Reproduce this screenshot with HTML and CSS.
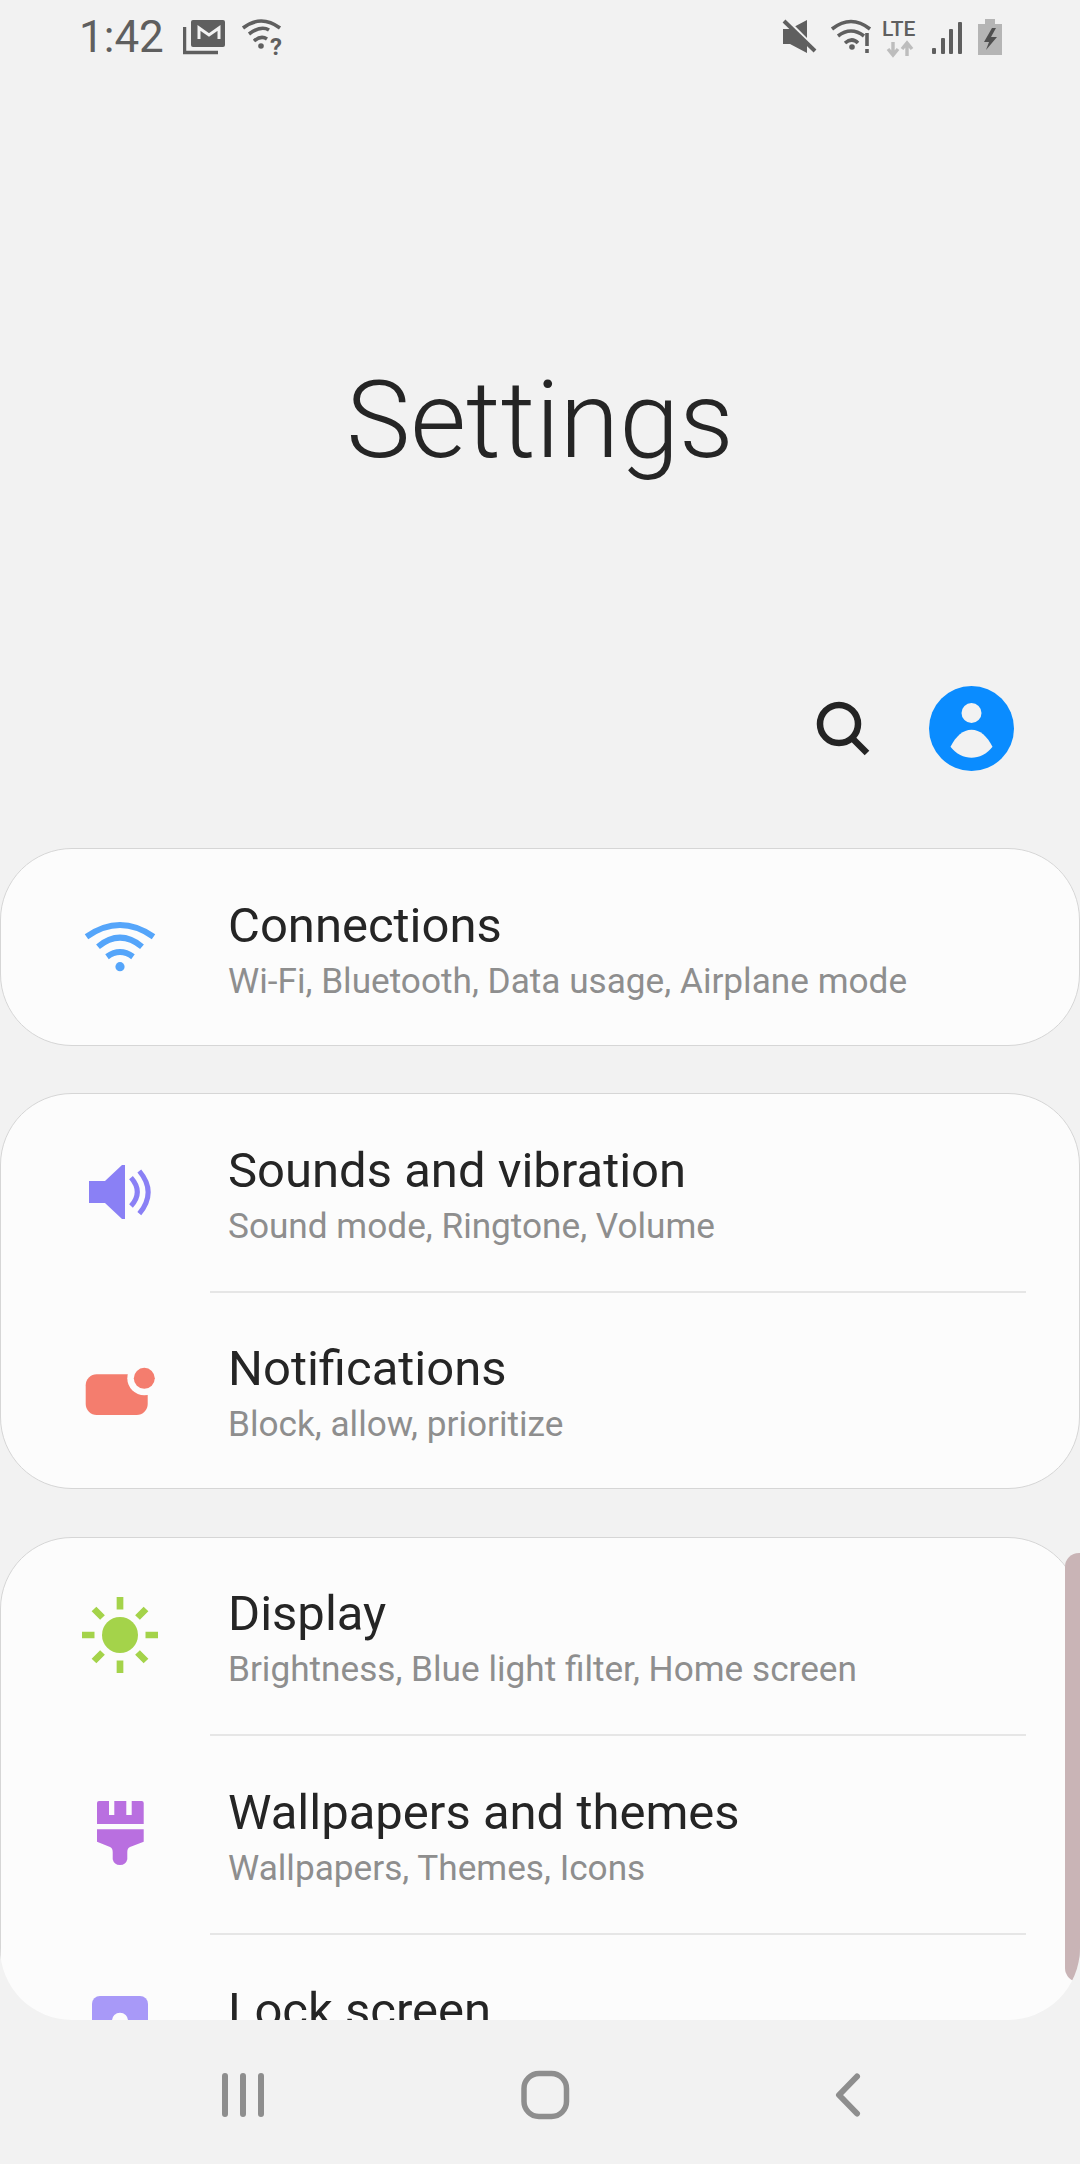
FILE: index.html
```html
<!DOCTYPE html>
<html lang="en">

<head>
    <meta charset="UTF-8">
    <meta name="viewport" content="width=device-width, initial-scale=1.0">
    <title>Settings</title>

    <link rel="stylesheet" href="styles.css">
</head>

<body>
    <div class="status">
        <div class="statusGroup">
            <span class="time">1:42</span>
            <svg class="mailIcon" width="42" height="74" viewBox="0 0 42 74">
                <rect x="8" y="20" width="34" height="27" rx="2" fill="#5f5f5f" />
                <path d="M16 39V28L26 35L36 28V39" fill="none" stroke="#f2f2f2" stroke-width="3" />
                <path d="M1.5 27V52.5H35" fill="none" stroke="#5f5f5f" stroke-width="3.5" />
            </svg>
            <svg class="wifiQ" width="44" height="74" viewBox="0 0 44 74">
                <path d="M2 28Q20 14 39 28M8 34Q20 25 28 30M13 41Q20 35 26 39" fill="none" stroke="#5f5f5f" stroke-width="3.6" />
                <circle cx="20" cy="46" r="2.8" fill="#5f5f5f" />
                <text class="statusMark" x="29" y="55">?</text>
            </svg>
        </div>
        <div class="statusGroup">
            <svg class="muteIcon" width="36" height="74" viewBox="0 0 36 74">
                <path d="M1 29H8L25 20V53L8 44H1Z" fill="#5f5f5f" />
                <path d="M5 20L35 50" stroke="#f2f2f2" stroke-width="3" />
                <path d="M2 21L33 51" stroke="#5f5f5f" stroke-width="4" />
            </svg>
            <svg class="wifiBang" width="44" height="74" viewBox="0 0 44 74">
                <path d="M2 29Q21 14 40 29M8 36Q21 26 34 36M15 43Q22 37 28 43" fill="none" stroke="#5f5f5f" stroke-width="3.6" />
                <circle cx="22" cy="47" r="2.8" fill="#5f5f5f" />
                <path d="M37 33V46M37 49V53" stroke="#5f5f5f" stroke-width="3.6" />
            </svg>
            <svg class="lteIcon" width="40" height="74" viewBox="0 0 40 74">
                <text class="lteText" x="4" y="36">LTE</text>
                <path d="M15 42V55M10 49L15 55L20 49" fill="none" stroke="#bdbdbd" stroke-width="3.4" />
                <path d="M29 56V43M24 49L29 43L34 49" fill="none" stroke="#bdbdbd" stroke-width="3.4" />
            </svg>
            <svg class="signalIcon" width="32" height="74" viewBox="0 0 32 74">
                <rect x="2" y="48" width="4" height="6" rx="1" fill="#5f5f5f" />
                <rect x="11" y="38" width="4" height="16" rx="1" fill="#5f5f5f" />
                <rect x="19" y="29" width="4" height="25" rx="1" fill="#5f5f5f" />
                <rect x="28" y="22" width="4" height="32" rx="1" fill="#5f5f5f" />
            </svg>
            <svg class="batteryIcon" width="24" height="74" viewBox="0 0 24 74">
                <path d="M7 19H17V24H24V55H0V24H7Z" fill="#b5b5b5" />
                <path d="M14 28L6 42H11L8 50L19 37H13L18 28Z" fill="#4f4f4f" />
            </svg>
        </div>
    </div>

    <div class="hero">
        <h1>Settings</h1>
    </div>

    <div class="actions">
        <svg class="searchIcon" width="56" height="56" viewBox="0 0 56 56">
            <circle cx="23" cy="23" r="19" fill="none" stroke="#242424" stroke-width="6.5" />
            <path d="M36 37L51 52" stroke="#242424" stroke-width="6.5" />
        </svg>
        <svg class="avatar" width="85" height="85" viewBox="0 0 85 85">
            <circle cx="42.5" cy="42.5" r="42.5" fill="#0a8cff" />
            <circle cx="42.5" cy="27" r="10" fill="#f2f2f2" />
            <path d="M21.5 60.8C27 50 34 43.8 42.5 43.8S58 50 63.5 60.8C58 68 50 71.8 42.5 71.8S27 68 21.5 60.8Z" fill="#f2f2f2" />
        </svg>
    </div>

    <div class="list">
        <div class="card">
            <div class="row">
                <svg class="rowIcon" width="80" height="80" viewBox="0 0 80 80">
                    <path d="M6.500 30.700Q40 7.300 73.500 30.700M18 40.700Q40 22.700 62 40.700M27 50.700Q40 41.300 53 50.700" fill="none" stroke="#55a5fa" stroke-width="6" />
                    <circle cx="40" cy="60.700" r="4.600" fill="#55a5fa" />
                </svg>
                <div class="rowText">
                    <h3>Connections</h3>
                    <p>Wi-Fi, Bluetooth, Data usage, Airplane mode</p>
                </div>
            </div>
        </div>

        <div class="card">
            <div class="row">
                <svg class="rowIcon" width="80" height="80" viewBox="0 0 80 80">
                    <path d="M9 30H25L42 14H45V68H42L25 52H9Z" fill="#8a80f5" />
                    <path d="M51 26.700Q63.600 41 51 55M59.300 20Q77 41 59.300 62.700" fill="none" stroke="#8a80f5" stroke-width="5" />
                </svg>
                <div class="rowText">
                    <h3>Sounds and vibration</h3>
                    <p>Sound mode, Ringtone, Volume</p>
                </div>
            </div>
            <div class="divider"></div>
            <div class="row">
                <svg class="rowIcon" width="80" height="80" viewBox="0 0 80 80">
                    <rect x="5.700" y="24.300" width="62" height="40.700" rx="11" fill="#f47d6e" />
                    <circle cx="64.300" cy="28.300" r="17" fill="#fcfcfc" />
                    <circle cx="64.300" cy="28.300" r="10.500" fill="#f47d6e" />
                </svg>
                <div class="rowText">
                    <h3>Notifications</h3>
                    <p>Block, allow, prioritize</p>
                </div>
            </div>
        </div>

        <div class="card">
            <div class="row">
                <svg class="rowIcon" width="80" height="80" viewBox="0 0 80 80">
                    <circle cx="40" cy="40" r="18" fill="#a4d34a" />
                    <path d="M40 2V14.500M40 65.500V78M2 40H14.500M65.500 40H78M14 14L22.500 22.500M57.500 57.500L66 66M66 14L57.500 22.500M22.500 57.500L14 66" stroke="#a4d34a" stroke-width="6.700" />
                </svg>
                <div class="rowText">
                    <h3>Display</h3>
                    <p>Brightness, Blue light filter, Home screen</p>
                </div>
            </div>
            <div class="divider"></div>
            <div class="row">
                <svg class="rowIcon" width="80" height="80" viewBox="0 0 80 80">
                    <path d="M19 8H29V22H34.300V8H46.300V22H51.700V8H61.700Q63.700 8 63.700 10V31H17V10Q17 8 19 8Z" fill="#b96fe0" />
                    <path d="M17 36.300H63.700V48.700L50 54Q47.300 55 47.300 59V66.300A7.500 7.500 0 0 1 32.700 66.300V59Q32.700 55 30 54L17 48.700Z" fill="#b96fe0" />
                </svg>
                <div class="rowText">
                    <h3>Wallpapers and themes</h3>
                    <p>Wallpapers, Themes, Icons</p>
                </div>
            </div>
            <div class="divider"></div>
            <div class="row">
                <svg class="rowIcon" width="80" height="80" viewBox="0 0 80 80">
                    <rect x="12" y="4" width="56" height="60" rx="8" fill="#a899f8" />
                    <circle cx="40" cy="28.700" r="8" fill="#fcfcfc" />
                </svg>
                <div class="rowText">
                    <h3>Lock screen</h3>
                </div>
            </div>
        </div>
        <div class="scrollThumb"></div>
    </div>

    <div class="navBar">
        <svg class="navIcon" width="44" height="48" viewBox="0 0 44 48">
            <path d="M3 6V44M21 6V44M39 6V44" fill="none" stroke="#8e8e8e" stroke-width="6" stroke-linecap="round" />
        </svg>
        <svg class="navIcon" width="50" height="50" viewBox="0 0 50 50">
            <rect x="3" y="3.500" width="42.500" height="43" rx="15" fill="none" stroke="#8e8e8e" stroke-width="5.500" />
        </svg>
        <svg class="navIcon" width="28" height="48" viewBox="0 0 28 48">
            <path d="M22 6.500L4 25L22 43.500" fill="none" stroke="#8e8e8e" stroke-width="6" stroke-linecap="round" stroke-linejoin="round" />
        </svg>
    </div>
</body>

</html>
```

FILE: styles.css
```css
* {
    margin: 0;
    padding: 0;
    box-sizing: border-box;
}

body {
    width: 1080px;
    height: 2164px;
    overflow: hidden;
    background-color: #f2f2f2;
    font-family: Roboto, "Liberation Sans", sans-serif;
}

svg {
    display: block;
    flex-shrink: 0;
}

.status {
    display: flex;
    justify-content: space-between;
    height: 74px;
    padding: 0 78px 0 79px;
}

.statusGroup {
    display: flex;
    align-items: flex-start;
}

.time {
    width: 104px;
    font-size: 44px;
    line-height: 74px;
    color: #5f5f5f;
}

.mailIcon {
    margin-right: 16px;
}

.statusMark {
    font-size: 24px;
    font-weight: 700;
    fill: #5f5f5f;
}

.muteIcon {
    margin-right: 12px;
}

.wifiBang {
    margin-right: 4px;
}

.lteIcon {
    margin-right: 12px;
}

.lteText {
    font-size: 21px;
    font-weight: 500;
    fill: #5f5f5f;
}

.signalIcon {
    margin-right: 16px;
}

.hero {
    height: 612px;
    padding-top: 286px;
    text-align: center;
}

h1 {
    font-size: 108px;
    font-weight: 300;
    line-height: 120px;
    color: #252525;
}

.actions {
    display: flex;
    justify-content: flex-end;
    align-items: center;
    gap: 57px;
    height: 85px;
    margin-bottom: 77px;
    padding-right: 66px;
}

.list {
    position: relative;
    display: flex;
    flex-direction: column;
    gap: 47.5px;
    height: 1172px;
    overflow: hidden;
    border-radius: 0 0 72px 72px;
}

.card {
    flex-shrink: 0;
    background-color: #fcfcfc;
    border: 1px solid #d6d6d6;
    border-radius: 72px;
}

.row {
    display: flex;
    align-items: flex-start;
    height: 196.5px;
    padding: 57px 0 0 79px;
}

.row:last-child {
    height: 195.5px;
}

.rowIcon {
    margin-right: 68px;
}

.rowText {
    margin-top: -8.5px;
}

.rowText h3 {
    font-size: 49px;
    font-weight: 400;
    line-height: 56px;
    color: #252525;
}

.rowText p {
    font-size: 35.2px;
    line-height: 44px;
    margin-top: 5px;
    color: #8e8e8e;
}

.divider {
    height: 2px;
    margin: 0 53px 0 209px;
    background-color: #e6e6e6;
}

.scrollThumb {
    position: absolute;
    top: 705px;
    right: 0;
    width: 15px;
    height: 429px;
    background-color: #c9b4b6;
    border-radius: 14px 0 0 14px;
}

.navBar {
    display: flex;
    height: 144px;
    padding: 50px 0 0 222px;
}

.navBar .navIcon:nth-child(1) {
    margin-right: 255px;
}

.navBar .navIcon:nth-child(2) {
    margin-right: 264px;
}
```
